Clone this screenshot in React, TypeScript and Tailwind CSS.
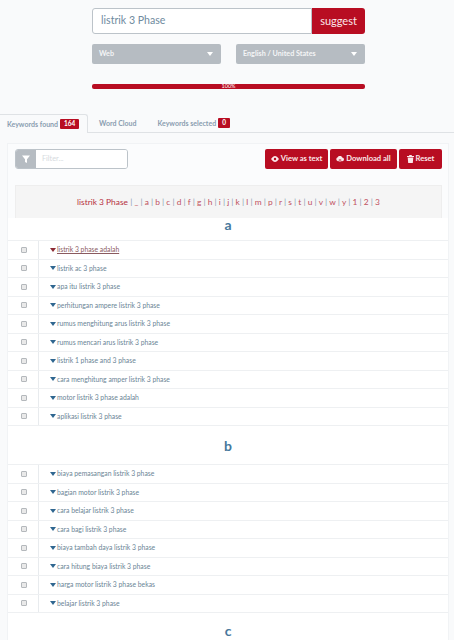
import React from "react";

const F = "font-['Lato',sans-serif]";

function Caret({ color = "#2f6690" }: { color?: string }) {
  return (
    <svg width="6" height="4" viewBox="0 0 6 4" className="shrink-0">
      <path d="M0 0h6L3 4z" fill={color} />
    </svg>
  );
}

function Row({ text, active }: { text: string; active?: boolean }) {
  return (
    <div className="flex h-[18.5px] items-center border-b border-[#eef0f2]">
      <div className="flex h-full w-[31px] shrink-0 items-center border-r border-[#e8ebee] pl-[13px]">
        <span className="block h-[6px] w-[6px] rounded-[1px] border border-[#b4b8bc] bg-[#e9e9e9]" />
      </div>
      <div className="flex items-center gap-[1px] pl-[11px]">
        <Caret color={active ? "#8c2b35" : "#2f6690"} />
        <span className={`text-[6.8px] leading-none ${active ? "text-[#8a5a5f] underline" : "text-[#6b8596]"}`}>{text}</span>
      </div>
    </div>
  );
}

function Select({ label, w }: { label: string; w: string }) {
  return (
    <div className={`flex h-[20px] items-center justify-between rounded-[2px] bg-[#b6bcc2] pl-[7px] pr-[8px] ${w}`}>
      <span className="text-[7.2px] font-bold text-[#f4f5f6]">{label}</span>
      <svg width="6" height="4" viewBox="0 0 6 4"><path d="M0 0h6L3 4z" fill="#fff" /></svg>
    </div>
  );
}

function Btn({ children, w }: { children: React.ReactNode; w: string }) {
  return (
    <div className={`flex h-[20px] items-center justify-center gap-[2px] rounded-[2px] bg-[#b80d22] text-[7.6px] font-bold text-[#fbe9eb] ${w}`}>
      {children}
    </div>
  );
}

const alpha = ["_", "a", "b", "c", "d", "f", "g", "h", "i", "j", "k", "l", "m", "p", "r", "s", "t", "u", "v", "w", "y", "1", "2", "3"];

const rowsA = [
  "listrik 3 phase adalah",
  "listrik ac 3 phase",
  "apa itu listrik 3 phase",
  "perhitungan ampere listrik 3 phase",
  "rumus menghitung arus listrik 3 phase",
  "rumus mencari arus listrik 3 phase",
  "listrik 1 phase and 3 phase",
  "cara menghitung amper listrik 3 phase",
  "motor listrik 3 phase adalah",
  "aplikasi listrik 3 phase",
];
const rowsB = [
  "biaya pemasangan listrik 3 phase",
  "bagian motor listrik 3 phase",
  "cara belajar listrik 3 phase",
  "cara bagi listrik 3 phase",
  "biaya tambah daya listrik 3 phase",
  "cara hitung biaya listrik 3 phase",
  "harga motor listrik 3 phase bekas",
  "belajar listrik 3 phase",
];

export default function App() {
  return (
    <div className={`${F} h-[640px] w-[454px] overflow-hidden bg-[#f9fafb]`}>
      <div className="ml-[92px] w-[273px] pt-[8px]">
        <div className="flex h-[26px]">
          <div className="flex flex-1 items-center rounded-l-[3px] border border-[#bcc3c9] bg-white pl-[8px] text-[10.6px] text-[#6f8b9e]">listrik 3 Phase</div>
          <div className="flex w-[53px] items-center justify-center rounded-r-[3px] bg-[#b80d22] text-[11px] text-[#fbe9eb]">suggest</div>
        </div>
        <div className="mt-[10px] flex justify-between">
          <Select label="Web" w="w-[129px]" />
          <Select label="English / United States" w="w-[129px]" />
        </div>
        <div className="mt-[20px] flex h-[5px] items-center justify-center rounded-[2px] bg-[#b80d22] text-[5.5px] leading-none text-white">100%</div>
      </div>

      <div className="mt-[25px] flex h-[19px] border-b border-[#dfe2e5] text-[7px] font-bold text-[#8a9db0]">
        <div className="flex h-[19px] w-[88px] items-center gap-[2px] rounded-tr-[3px] border-r border-t border-[#dfe2e5] bg-[#f9fafb] pl-[7px]">
          <span>Keywords found</span>
          <span className="rounded-[1px] bg-[#b80d22] px-[4px] py-[1.5px] text-[6.5px] leading-none text-white">164</span>
        </div>
        <div className="ml-[11px] flex items-center">Word Cloud</div>
        <div className="ml-[21px] flex items-center gap-[2px]">
          <span>Keywords selected</span>
          <span className="rounded-[1px] bg-[#b80d22] px-[4px] py-[1.5px] text-[6.5px] leading-none text-white">0</span>
        </div>
      </div>

      <div className="ml-[7px] mr-[5px] mt-[10px] border border-[#f1f3f5] bg-white">
        <div className="bg-[#fbfcfd] pl-[7px] pr-[6px] pt-[5px]">
          <div className="flex items-center justify-between">
            <div className="flex h-[20px] w-[113px] overflow-hidden rounded-[3px] border border-[#bcc3c9]">
              <div className="flex w-[20px] items-center justify-center bg-[#b6bcc2]">
                <svg width="8" height="8" viewBox="0 0 8 8"><path d="M0 0.5h8L5 4.2V8L3 7V4.2z" fill="#fff" /></svg>
              </div>
              <div className="flex flex-1 items-center bg-white pl-[6px] text-[7.3px] text-[#d5dade]">Filter...</div>
            </div>
            <div className="flex gap-[2px]">
              <Btn w="w-[63px]">
                <svg width="8" height="6" viewBox="0 0 8 6"><path d="M0 3C1.5 1 2.7 0 4 0s2.5 1 4 3C6.5 5 5.3 6 4 6S1.5 5 0 3z" fill="#fbe9eb" /><circle cx="4" cy="3" r="1.2" fill="#b80d22" /></svg>
                <span>View as text</span>
              </Btn>
              <Btn w="w-[67px]">
                <svg width="8" height="6" viewBox="0 0 8 6"><path d="M2 5.2a2 2 0 0 1-.3-3.9A2.4 2.4 0 0 1 6.2 1.6 1.8 1.8 0 0 1 6.2 5.2H5.2V3.4H2.8v1.8z M2.6 4.4h2.8L4 6z" fill="#fbe9eb" /></svg>
                <span>Download all</span>
              </Btn>
              <Btn w="w-[43px]">
                <svg width="7" height="8" viewBox="0 0 7 8"><path d="M0 1h2.2V0h2.6v1H7v1H0zM.7 2.5h5.6L5.8 8H1.2z" fill="#fbe9eb" /></svg>
                <span>Reset</span>
              </Btn>
            </div>
          </div>
          <div className="mt-[16px] flex h-[33px] items-center justify-center border border-b-0 border-[#eeeeee] bg-[#f5f5f5] text-[8.4px] text-[#c0505d]">
            <span className="text-[#b5303f]">listrik 3 Phase</span>
            <span className="text-[#8a9db0]">&nbsp;|&nbsp;</span>
            {alpha.map((c, i) => (
              <span key={c}>
                <span>{c}</span>
                {i < alpha.length - 1 && <span className="text-[#8a9db0]">&nbsp;|&nbsp;</span>}
              </span>
            ))}
          </div>
        </div>
        <div>
          <div className="h-[22px] text-center text-[14px] font-bold leading-[14px] text-[#47789c]">a</div>
          <div className="border-t border-[#eef0f2]">{rowsA.map((r, i) => <Row key={r} text={r} active={i === 0} />)}</div>
          <div className="flex h-[38px] items-center justify-center text-[14px] font-bold text-[#47789c]">b</div>
          <div className="border-t border-[#eef0f2]">{rowsB.map((r) => <Row key={r} text={r} />)}</div>
          <div className="h-[30px] pt-[11px] text-center text-[14px] font-bold leading-[14px] text-[#47789c]">c</div>
        </div>
      </div>
    </div>
  );
}
